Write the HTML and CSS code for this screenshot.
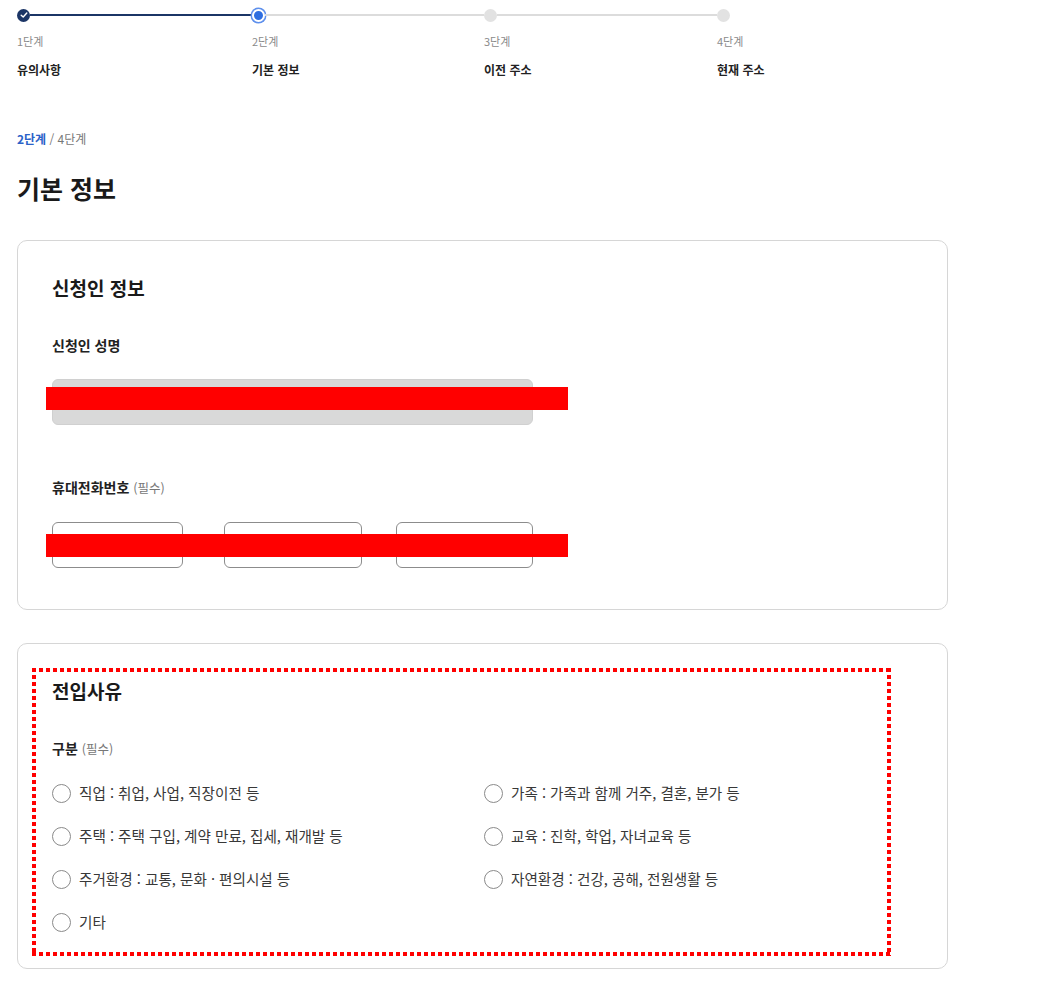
FILE: index.html
```html
<!DOCTYPE html>
<html lang="ko">
<head>
  <meta charset="UTF-8" />
  <meta name="viewport" content="width=device-width, initial-scale=1.0"/>
  <title>전입신고 - 기본 정보</title>
  <link rel="stylesheet" href="styles.css">
</head>
<body>
  <ol class="stepper">
    <li class="step done">
      <div class="track">
        <span class="dot">
          <svg width="8" height="8" viewBox="0 0 8 8"><path d="M1.2 4.2 L3.2 6 L6.8 2" fill="none" stroke="#fff" stroke-width="1.4" stroke-linecap="round" stroke-linejoin="round"/></svg>
        </span>
        <span class="line"></span>
      </div>
      <div class="step-no">1단계</div>
      <div class="step-name">유의사항</div>
    </li>
    <li class="step current">
      <div class="track">
        <span class="dot"></span>
        <span class="line"></span>
      </div>
      <div class="step-no">2단계</div>
      <div class="step-name">기본 정보</div>
    </li>
    <li class="step">
      <div class="track">
        <span class="dot"></span>
        <span class="line"></span>
      </div>
      <div class="step-no">3단계</div>
      <div class="step-name">이전 주소</div>
    </li>
    <li class="step last">
      <div class="track">
        <span class="dot"></span>
      </div>
      <div class="step-no">4단계</div>
      <div class="step-name">현재 주소</div>
    </li>
  </ol>

  <main>
    <p class="crumb"><strong>2단계</strong> / 4단계</p>
    <h1>기본 정보</h1>

    <section class="card">
      <h2>신청인 정보</h2>
      <div class="field">
        <label>신청인 성명</label>
        <div class="row">
          <input class="input wide" type="text" disabled>
          <span class="redact"></span>
        </div>
      </div>
      <div class="field">
        <label>휴대전화번호 <span class="req">(필수)</span></label>
        <div class="row phone">
          <input class="input p1" type="text">
          <input class="input p2" type="text">
          <input class="input p3" type="text">
          <span class="redact low"></span>
        </div>
      </div>
    </section>

    <section class="card reason">
      <div class="marker"></div>
      <h2>전입사유</h2>
      <div class="field">
        <label>구분 <span class="req">(필수)</span></label>
        <div class="radios">
          <label class="radio"><input type="radio" name="reason"><span class="circle"></span>직업 : 취업, 사업, 직장이전 등</label>
          <label class="radio"><input type="radio" name="reason"><span class="circle"></span>가족 : 가족과 함께 거주, 결혼, 분가 등</label>
          <label class="radio"><input type="radio" name="reason"><span class="circle"></span>주택 : 주택 구입, 계약 만료, 집세, 재개발 등</label>
          <label class="radio"><input type="radio" name="reason"><span class="circle"></span>교육 : 진학, 학업, 자녀교육 등</label>
          <label class="radio"><input type="radio" name="reason"><span class="circle"></span>주거환경 : 교통, 문화 · 편의시설 등</label>
          <label class="radio"><input type="radio" name="reason"><span class="circle"></span>자연환경 : 건강, 공해, 전원생활 등</label>
          <label class="radio"><input type="radio" name="reason"><span class="circle"></span>기타</label>
        </div>
      </div>
    </section>
  </main>
</body>
</html>
```

FILE: styles.css
```css
* {
  margin: 0;
  padding: 0;
  box-sizing: border-box;
}

body {
  font-family: "Noto Sans CJK KR", "Noto Sans", sans-serif;
  color: #222;
  background: #fff;
  padding: 0 17px;
}

/* stepper */
.stepper {
  list-style: none;
  display: grid;
  grid-template-columns: 235px 232px 233px 120px;
  padding-top: 8px;
}

.track {
  display: flex;
  align-items: center;
  height: 14px;
}

.dot {
  width: 13px;
  height: 13px;
  border-radius: 50%;
  background: #e2e2e2;
  flex-shrink: 0;
  display: flex;
  align-items: center;
  justify-content: center;
}

.line {
  flex: 1;
  height: 2px;
  background: #dcdcdc;
}

.done .dot {
  background: #1b3566;
}

.done .line {
  background: #1b3566;
}

.current .dot {
  background: #2f6ee0;
  border: 2px solid #fff;
  box-shadow: 0 0 0 1.5px #5d8fec;
}

.step-no {
  font-size: 11px;
  color: #8a8a8a;
  margin-top: 11px;
  line-height: 16px;
}

.step-name {
  font-size: 12px;
  font-weight: bold;
  color: #222;
  margin-top: 13px;
  line-height: 16px;
}

/* heading */
.crumb {
  font-size: 12px;
  color: #777;
  margin-top: 52px;
  line-height: 18px;
}

.crumb strong {
  color: #2b62c8;
}

h1 {
  font-size: 25px;
  font-weight: bold;
  color: #1a1a1a;
  margin-top: 23px;
  line-height: 34px;
}

/* cards */
.card {
  position: relative;
  width: 931px;
  border: 1.5px solid #d6d6d6;
  border-radius: 10px;
  padding: 33px 34px 41px;
  margin-top: 35px;
}

.card h2 {
  font-size: 19px;
  font-weight: bold;
  color: #1a1a1a;
  line-height: 28px;
}

.field > label {
  display: block;
  font-size: 14px;
  font-weight: bold;
  color: #222;
  line-height: 20px;
  margin-top: 33px;
}

.card .field + .field > label {
  margin-top: 52px;
}

.req {
  font-size: 12.5px;
  font-weight: normal;
  color: #777;
}

.row {
  position: relative;
  display: flex;
  margin-top: 24px;
}

.input {
  height: 46px;
  border: 1.5px solid #8c8c8c;
  border-radius: 6px;
  background: #fff;
  font: inherit;
}

.input.wide {
  width: 481px;
  background: #d9d9d9;
  border-color: #d0d0d0;
}

.p1 {
  width: 131px;
}

.p2 {
  width: 138px;
  margin-left: 41px;
}

.p3 {
  width: 137px;
  margin-left: 34px;
}

.redact {
  position: absolute;
  left: -6px;
  top: 8px;
  width: 522px;
  height: 23px;
  background: #ff0000;
}

.redact.low {
  top: 12px;
}

/* reason */
.reason {
  margin-top: 33px;
  padding-bottom: 35px;
}

.marker {
  position: absolute;
  left: 14px;
  top: 24px;
  width: 859px;
  height: 288px;
  background:
    repeating-linear-gradient(90deg, #ff0000 0 4px, transparent 4px 7px) top left / 100% 4px no-repeat,
    repeating-linear-gradient(90deg, #ff0000 0 4px, transparent 4px 7px) bottom left / 100% 4px no-repeat,
    repeating-linear-gradient(180deg, #ff0000 0 4px, transparent 4px 7px) top left / 4px 100% no-repeat,
    repeating-linear-gradient(180deg, #ff0000 0 4px, transparent 4px 7px) top right / 4px 100% no-repeat;
}

.radios {
  display: grid;
  grid-template-columns: 432px 1fr;
  row-gap: 21px;
  margin-top: 23px;
}

.radio {
  display: flex;
  align-items: center;
  font-size: 14.6px;
  color: #383838;
  line-height: 22px;
  height: 22px;
}

.radio input {
  display: none;
}

.circle {
  width: 19px;
  height: 19px;
  border: 1.5px solid #8a8a8a;
  border-radius: 50%;
  margin-right: 8px;
  flex-shrink: 0;
}
```
